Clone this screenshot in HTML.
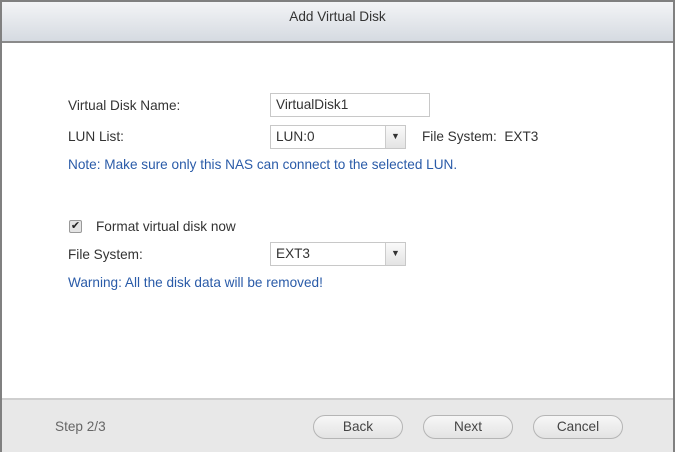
<!DOCTYPE html><html><head><style>
body{margin:0;width:675px;height:452px;overflow:hidden;font-family:"Liberation Sans",sans-serif;font-size:13.6px;color:#333}
.w{position:absolute;left:0;top:0;width:671px;height:448px;border:2px solid #808080;background:#fff}
.h{position:absolute;left:0;top:0;width:671px;height:39px;background:linear-gradient(#f3f4f6,#d5dae1);border-bottom:2px solid #8a8a8a;text-align:center;line-height:29px;font-size:13.6px;color:#333}
.a{position:absolute}
.in{position:absolute;border:1px solid #c8c8c8;background:#fff;box-sizing:border-box;padding-left:5px;line-height:22px}
.ar{position:absolute;right:0;top:0;width:19px;height:22px;border-left:1px solid #ccc;background:linear-gradient(#fafafa,#e4e4e4);text-align:center;font-size:9px;line-height:20px}
.f{position:absolute;left:0;top:396px;width:671px;height:52px;background:#e8e8e8;border-top:2px solid #cfcfcf}
.b{position:absolute;top:15px;width:88px;height:22px;border:1px solid #b5b5b5;border-radius:12px;background:linear-gradient(#f7f7f7,#e3e3e3);text-align:center;line-height:22px;font-size:13.6px;color:#444}
.bl{color:#2a5ba8}
</style></head><body><div class="w">
<div class="h">Add Virtual Disk</div>
<div class="a" style="left:66px;top:96px">Virtual Disk Name:</div>
<div class="in" style="left:268px;top:91px;width:160px;height:24px">VirtualDisk1</div>
<div class="a" style="left:66px;top:127px">LUN List:</div>
<div class="in" style="left:268px;top:123px;width:136px;height:24px">LUN:0<div class="ar">&#9660;</div></div>
<div class="a" style="left:420px;top:127px">File System:&nbsp; EXT3</div>
<div class="a bl" style="left:66px;top:155px">Note: Make sure only this NAS can connect to the selected LUN.</div>
<div class="a" style="left:67px;top:218px;width:11px;height:11px;border:1px solid #999;border-radius:2px;background:#e4e4e4;font-size:11px;line-height:11px;text-align:center;color:#222">&#10004;</div>
<div class="a" style="left:94px;top:217px">Format virtual disk now</div>
<div class="a" style="left:66px;top:245px">File System:</div>
<div class="in" style="left:268px;top:240px;width:136px;height:24px">EXT3<div class="ar">&#9660;</div></div>
<div class="a bl" style="left:66px;top:273px">Warning: All the disk data will be removed!</div>
<div class="f">
<div class="a" style="left:53px;top:19px;color:#666">Step 2/3</div>
<div class="b" style="left:311px">Back</div>
<div class="b" style="left:421px">Next</div>
<div class="b" style="left:531px">Cancel</div>
</div></div></body></html>
